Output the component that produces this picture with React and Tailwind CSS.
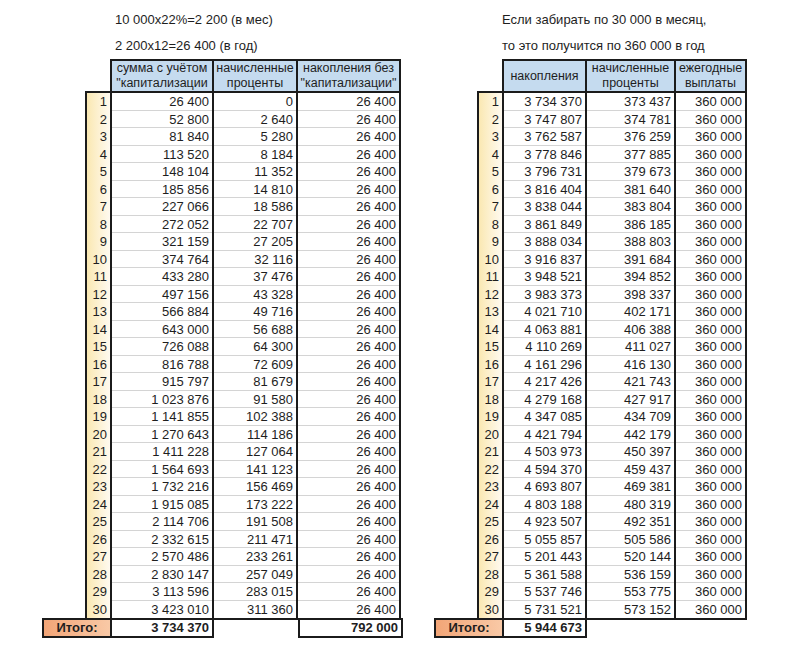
import React from 'react';

const leftRows = [
  ['26 400', '0'], ['52 800', '2 640'], ['81 840', '5 280'], ['113 520', '8 184'],
  ['148 104', '11 352'], ['185 856', '14 810'], ['227 066', '18 586'], ['272 052', '22 707'],
  ['321 159', '27 205'], ['374 764', '32 116'], ['433 280', '37 476'], ['497 156', '43 328'],
  ['566 884', '49 716'], ['643 000', '56 688'], ['726 088', '64 300'], ['816 788', '72 609'],
  ['915 797', '81 679'], ['1 023 876', '91 580'], ['1 141 855', '102 388'], ['1 270 643', '114 186'],
  ['1 411 228', '127 064'], ['1 564 693', '141 123'], ['1 732 216', '156 469'], ['1 915 085', '173 222'],
  ['2 114 706', '191 508'], ['2 332 615', '211 471'], ['2 570 486', '233 261'], ['2 830 147', '257 049'],
  ['3 113 596', '283 015'], ['3 423 010', '311 360'],
];

const rightRows = [
  ['3 734 370', '373 437'], ['3 747 807', '374 781'], ['3 762 587', '376 259'], ['3 778 846', '377 885'],
  ['3 796 731', '379 673'], ['3 816 404', '381 640'], ['3 838 044', '383 804'], ['3 861 849', '386 185'],
  ['3 888 034', '388 803'], ['3 916 837', '391 684'], ['3 948 521', '394 852'], ['3 983 373', '398 337'],
  ['4 021 710', '402 171'], ['4 063 881', '406 388'], ['4 110 269', '411 027'], ['4 161 296', '416 130'],
  ['4 217 426', '421 743'], ['4 279 168', '427 917'], ['4 347 085', '434 709'], ['4 421 794', '442 179'],
  ['4 503 973', '450 397'], ['4 594 370', '459 437'], ['4 693 807', '469 381'], ['4 803 188', '480 319'],
  ['4 923 507', '492 351'], ['5 055 857', '505 586'], ['5 201 443', '520 144'], ['5 361 588', '536 159'],
  ['5 537 746', '553 775'], ['5 731 521', '573 152'],
];

// one bordered column: header on top, 30 cells under it
function Column({ width, header, values }) {
  return (
    <div className={`flex flex-col border-2 border-[#1b1b1b] -ml-[2px] ${width}`}>
      <div className="h-[32px] flex items-center justify-center bg-[#c5dbef] border-b-2 border-[#1b1b1b]">
        <div className="text-center text-[12.5px] leading-[15px] whitespace-nowrap">{header}</div>
      </div>
      {values.map((v, i) => (
        <div
          key={i}
          className={`h-[17.5px] leading-[17px] text-right pr-[3px] ${i < values.length - 1 ? 'border-b border-[#d4d4d4]' : ''}`}
        >
          {v}
        </div>
      ))}
    </div>
  );
}

function RowNumbers() {
  return (
    <div className="flex flex-col w-[27px] border-2 border-[#1b1b1b] bg-linear-to-r from-[#fae8b2] to-[#fffaf0]">
      {leftRows.map((_, i) => (
        <div key={i} className="h-[17.5px] leading-[17px] text-right pr-[3px]">{i + 1}</div>
      ))}
    </div>
  );
}

function Block({ lines, textPad, cols, totals }) {
  return (
    <div className="flex flex-col">
      <div className={`flex flex-col gap-[4px] pt-[9px] mb-[2px] ${textPad}`}>
        {lines.map((l, i) => (
          <div key={i} className="h-[22px] leading-[22px]">{l}</div>
        ))}
      </div>
      <div className="flex items-end pl-[43px]">
        <RowNumbers />
        {cols.map((c, i) => (
          <Column key={i} width={c.width} header={c.header} values={c.values} />
        ))}
      </div>
      <div className="flex -mt-[2px] h-[20px] font-bold">
        <div className="w-[70px] border-2 border-[#1b1b1b] bg-linear-to-r from-[#f2a577] to-[#f9c9a6] flex items-center justify-center leading-[16px]">
          Итого:
        </div>
        {totals}
      </div>
    </div>
  );
}

export default function App() {
  const twoLines = (a, b) => (<>{a}<br />{b}</>);

  const leftCols = [
    { width: 'w-[104px]', header: twoLines('сумма с учётом', '"капитализации'), values: leftRows.map(r => r[0]) },
    { width: 'w-[86px]', header: twoLines('начисленные', 'проценты'), values: leftRows.map(r => r[1]) },
    { width: 'w-[105px]', header: twoLines('накопления без', '"капитализации"'), values: leftRows.map(() => '26 400') },
  ];

  const rightCols = [
    { width: 'w-[85px]', header: 'накопления', values: rightRows.map(r => r[0]) },
    { width: 'w-[91px]', header: twoLines('начисленные', 'проценты'), values: rightRows.map(r => r[1]) },
    { width: 'w-[73px]', header: twoLines('ежегодные', 'выплаты'), values: rightRows.map(() => '360 000') },
  ];

  return (
    <div
      className="w-[800px] h-[666px] bg-white text-[#1e1e1e] text-[13px] flex gap-[31px] pl-[42px]"
      style={{ fontFamily: '"Liberation Sans", Arial, sans-serif' }}
    >
      <Block
        lines={['10 000х22%=2 200 (в мес)', '2 200х12=26 400 (в год)']}
        textPad="pl-[73px]"
        cols={leftCols}
        totals={
          <>
            <div className="w-[104px] -ml-[2px] border-2 border-[#1b1b1b] text-right pr-[3px] leading-[16px]">3 734 370</div>
            <div className="w-[84px]"></div>
            <div className="w-[105px] border-2 border-[#1b1b1b] text-right pr-[3px] leading-[16px]">792 000</div>
          </>
        }
      />
      <Block
        lines={['Если забирать по 30 000 в месяц,', 'то это получится по 360 000 в год']}
        textPad="pl-[68px]"
        cols={rightCols}
        totals={
          <div className="w-[85px] -ml-[2px] border-2 border-[#1b1b1b] text-right pr-[3px] leading-[16px]">5 944 673</div>
        }
      />
    </div>
  );
}
